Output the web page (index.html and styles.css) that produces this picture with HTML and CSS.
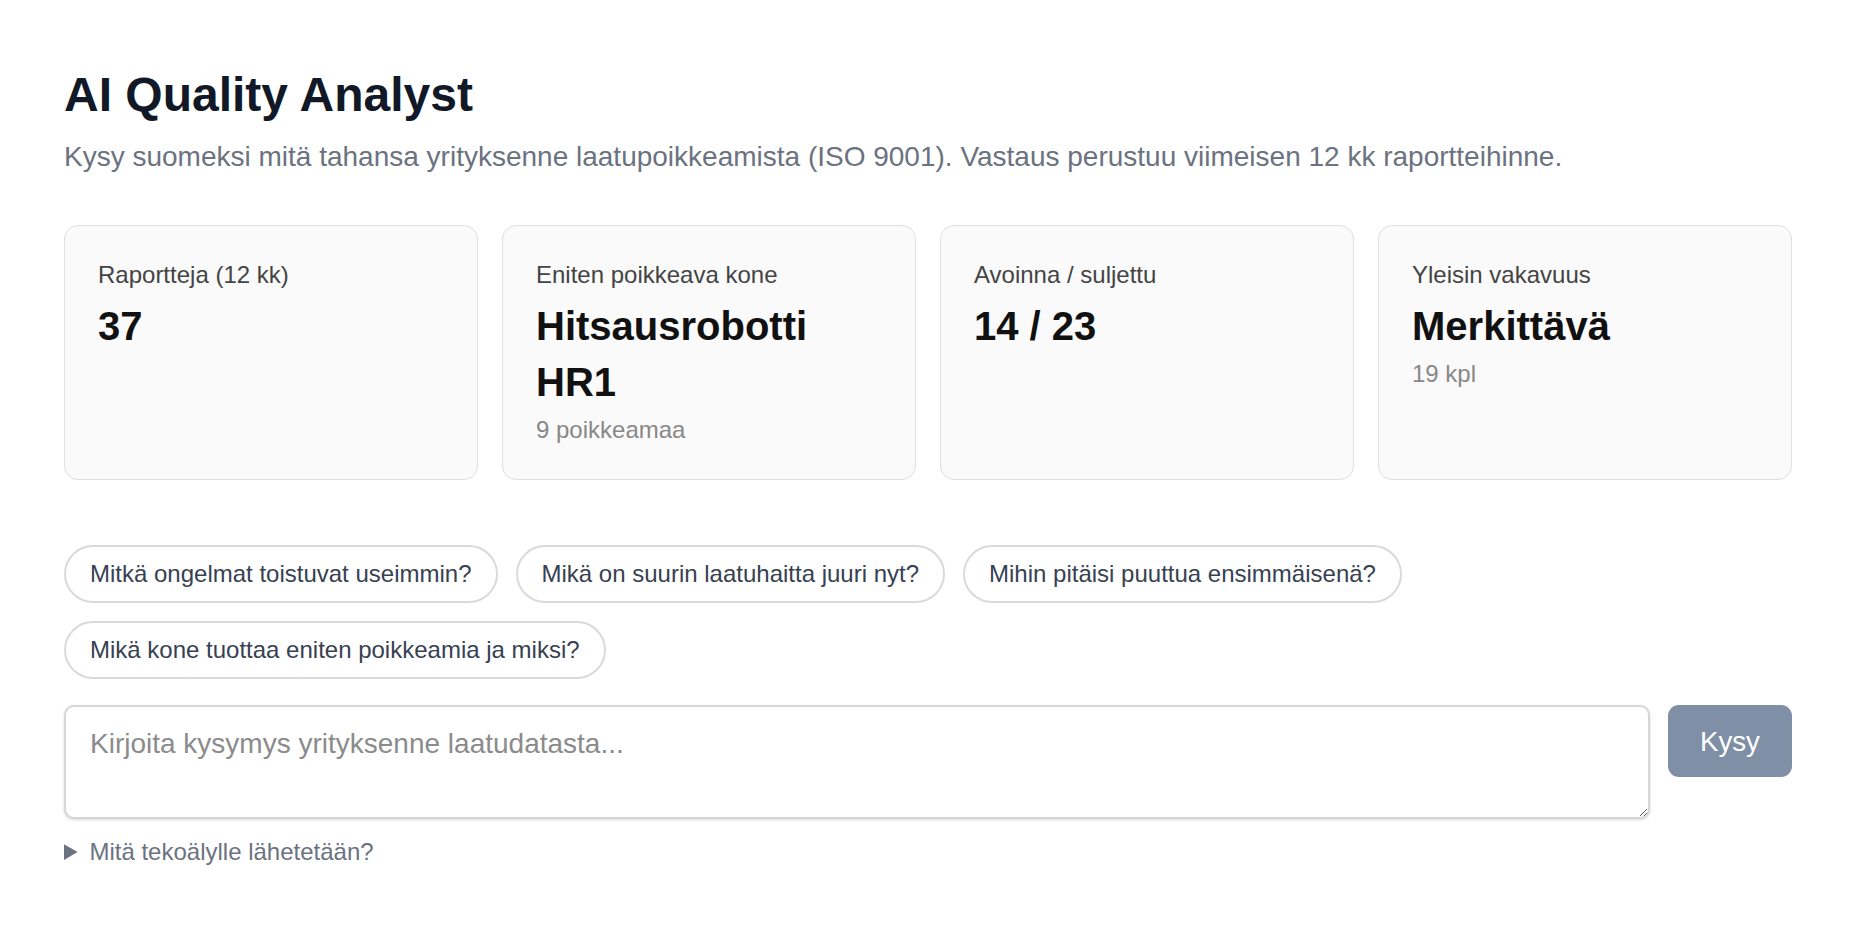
FILE: index.html
```html
<!DOCTYPE html>
<html lang="fi">
<head>
<meta charset="utf-8">
<title>AI Quality Analyst</title>
<link rel="stylesheet" href="styles.css">
</head>
<body>
<main class="page">
  <h1 class="title">AI Quality Analyst</h1>
  <p class="subtitle">Kysy suomeksi mitä tahansa yrityksenne laatupoikkeamista (ISO 9001). Vastaus perustuu viimeisen 12 kk raportteihinne.</p>

  <section class="stats">
    <div class="card">
      <div class="card-label">Raportteja (12 kk)</div>
      <div class="card-value">37</div>
    </div>
    <div class="card">
      <div class="card-label">Eniten poikkeava kone</div>
      <div class="card-value">Hitsausrobotti HR1</div>
      <div class="card-sub">9 poikkeamaa</div>
    </div>
    <div class="card">
      <div class="card-label">Avoinna / suljettu</div>
      <div class="card-value">14 / 23</div>
    </div>
    <div class="card">
      <div class="card-label">Yleisin vakavuus</div>
      <div class="card-value">Merkittävä</div>
      <div class="card-sub">19 kpl</div>
    </div>
  </section>

  <section class="chips">
    <button class="chip" type="button">Mitkä ongelmat toistuvat useimmin?</button>
    <button class="chip" type="button">Mikä on suurin laatuhaitta juuri nyt?</button>
    <button class="chip" type="button">Mihin pitäisi puuttua ensimmäisenä?</button>
    <button class="chip" type="button">Mikä kone tuottaa eniten poikkeamia ja miksi?</button>
  </section>

  <form class="ask">
    <textarea class="ask-input" placeholder="Kirjoita kysymys yrityksenne laatudatasta..."></textarea>
    <button class="ask-btn" type="button">Kysy</button>
  </form>

  <details class="info">
    <summary>Mitä tekoälylle lähetetään?</summary>
  </details>
</main>
</body>
</html>
```
FILE: styles.css
```css
* {
  box-sizing: border-box;
}

html, body {
  margin: 0;
  background: #ffffff;
}

body {
  font-family: "Liberation Sans", Arial, sans-serif;
  color: #111111;
}

.page {
  padding: 67px 64px 40px;
}

.title {
  margin: 0 0 13px;
  font-size: 48px;
  line-height: 56px;
  font-weight: 700;
  color: #111827;
}

.subtitle {
  margin: 0;
  font-size: 28px;
  line-height: 42px;
  color: #6b7280;
}

.stats {
  margin-top: 47px;
  display: grid;
  grid-template-columns: repeat(4, 1fr);
  gap: 24px;
}

.card {
  background: #fafafa;
  border: 1px solid #dfdfdf;
  border-radius: 14px;
  padding: 32px 32px 32px 33px;
}

.card-label {
  font-size: 24px;
  line-height: 34px;
  color: #444444;
  margin-bottom: 6px;
}

.card-value {
  font-size: 40px;
  line-height: 56px;
  font-weight: 700;
  color: #111111;
}

.card-sub {
  margin-top: 3px;
  font-size: 24px;
  line-height: 34px;
  color: #888888;
}

.chips {
  margin-top: 65px;
  display: flex;
  flex-wrap: wrap;
  gap: 18px;
}

.chip {
  font-family: "Liberation Sans", Arial, sans-serif;
  font-size: 24px;
  line-height: 28px;
  color: #374151;
  background: #ffffff;
  border: 2px solid #dadade;
  border-radius: 999px;
  padding: 13px 24px;
  cursor: pointer;
}

.ask {
  margin: 26px 0 0;
  display: flex;
  align-items: flex-start;
  gap: 18px;
}

.ask-input {
  flex: 1;
  height: 114px;
  font-family: "Liberation Sans", Arial, sans-serif;
  font-size: 28px;
  line-height: 1.4;
  color: #111111;
  padding: 17px 24px 12px;
  border: 2px solid #d6d6db;
  border-radius: 10px;
  box-shadow: 0 1px 3px rgba(0, 0, 0, 0.16);
  background: #ffffff;
  resize: vertical;
}

.ask-input::placeholder {
  color: #8b8b8b;
}

.ask-btn {
  width: 124px;
  height: 72px;
  font-family: "Liberation Sans", Arial, sans-serif;
  font-size: 27.6px;
  color: #ffffff;
  background: #7f8fa6;
  border: none;
  border-radius: 11px;
  padding-top: 3px;
  cursor: pointer;
}

.info {
  margin-top: 15px;
}

.info summary {
  font-size: 24px;
  line-height: 36px;
  color: #6b7280;
  cursor: pointer;
}
```
